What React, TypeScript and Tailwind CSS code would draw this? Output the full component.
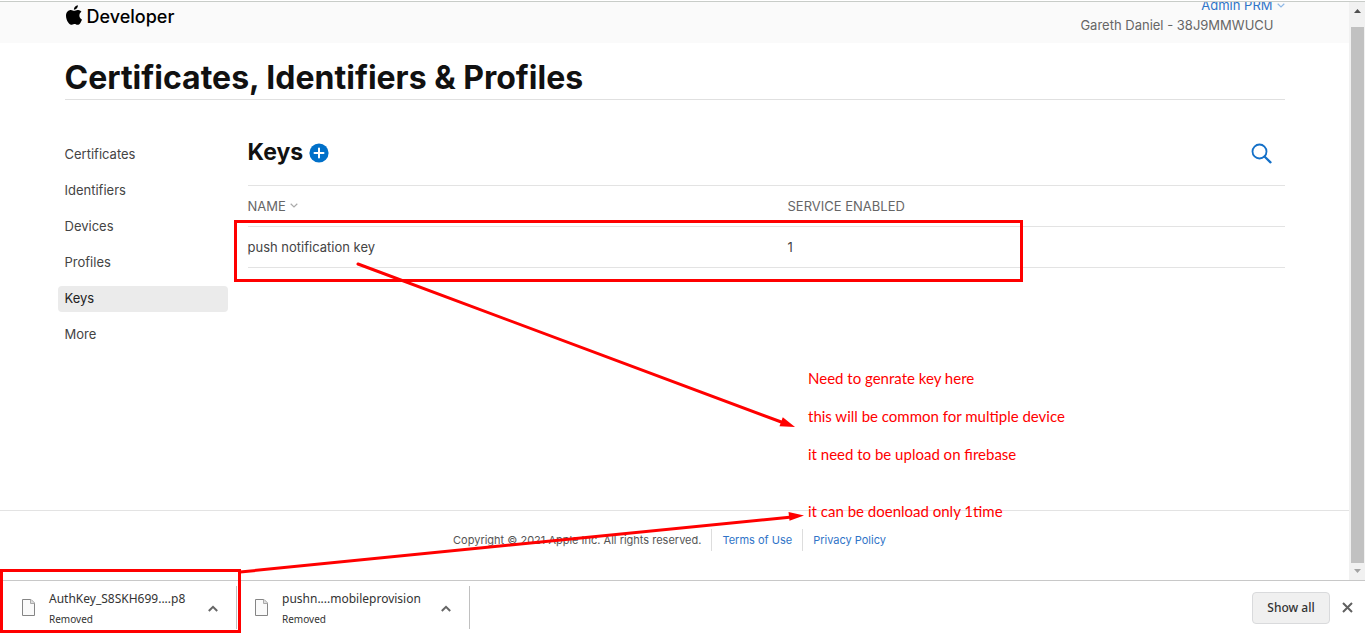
import React from "react";

const navItems = ["Certificates", "Identifiers", "Devices", "Profiles", "Keys", "More"];

const keys = [{ name: "push notification key", services: 1 }];

const downloads = ["AuthKey_S8SKH699....p8", "pushn....mobileprovision"];

function AppleLogo() {
  return (
    <svg width="16" height="20" viewBox="0 0 814 1000" fill="#000" aria-hidden="true">
      <path d="M788.1 340.9c-5.800 4.500-108.200 62.200-108.200 190.500 0 148.400 130.300 200.900 134.200 202.200-.6 3.200-20.700 71.900-68.700 141.900-42.800 61.600-87.500 123.100-155.500 123.100s-85.500-39.500-164-39.500c-76.500 0-103.700 40.800-165.900 40.800s-105.600-57-155.500-127C46.700 790.700 0 663 0 541.800c0-194.400 126.400-297.500 250.800-297.500 66.100 0 121.200 43.400 162.700 43.400 39.500 0 101.100-46 176.300-46 28.500 0 130.900 2.600 198.300 99.200zm-234-181.500c31.100-36.900 53.100-88.100 53.100-139.300 0-7.100-.6-14.300-1.900-20.100-50.600 1.900-110.800 33.700-147.100 75.800-28.500 32.400-55.100 83.600-55.100 135.500 0 7.800 1.300 15.600 1.900 18.100 3.200.6 8.400 1.300 13.600 1.300 45.400 0 102.500-30.400 135.500-71.300z" />
    </svg>
  );
}

function Chevron({ color }: { color: string }) {
  return (
    <svg width="8" height="5" viewBox="0 0 8 5" fill="none" stroke={color} strokeWidth="1.200" aria-hidden="true">
      <path d="M.7.8 4 3.900 7.300.8" />
    </svg>
  );
}

function Header() {
  return (
    <header className="h-[41px] overflow-hidden bg-[#fafafa]">
      <div className="mx-auto flex h-full max-w-[1220px] items-start justify-between">
        <a href="#developer" className="flex items-center gap-[5px] pt-px pl-px text-lg leading-7 font-medium text-black">
          <span className="-mt-1">
            <AppleLogo />
          </span>
          Developer
        </a>
        <div className="-mt-[7px] text-[13px] leading-5 text-[#666]">
          <button type="button" className="ml-auto flex items-center gap-1 text-[#2f74c8]">
            Admin PRM <Chevron color="#8fb8e6" />
          </button>
          <p className="pr-[11px]">Gareth Daniel - 38J9MMWUCU</p>
        </div>
      </div>
    </header>
  );
}

function Sidebar() {
  return (
    <nav className="-ml-[7px] flex w-[170px] shrink-0 flex-col gap-[10px]">
      {navItems.map((item) => (
        <a
          key={item}
          href={`#${item.toLowerCase()}`}
          className={
            item === "Keys"
              ? "rounded bg-[#ebebeb] px-[7px] pb-[2px] text-[13px] leading-6 text-[#222]"
              : "px-[7px] pb-[2px] text-[13px] leading-6 text-[#444]"
          }
        >
          {item}
        </a>
      ))}
    </nav>
  );
}

function KeysPanel() {
  return (
    <main className="min-w-0 flex-1">
      <div className="flex h-[50px] items-start justify-between border-b border-[#e3e3e3] pr-[13px]">
        <div className="flex items-center gap-[6px]">
          <h2 className="text-[23px] leading-8 font-bold text-[#111]">Keys</h2>
          <button type="button" aria-label="Add key" className="pt-[2px]">
            <svg width="20" height="20" viewBox="0 0 20 20">
              <circle cx="10" cy="10" r="9.600" fill="#0070c9" />
              <path d="M10 5.500v9M5.500 10h9" stroke="#fff" strokeWidth="2" strokeLinecap="round" />
            </svg>
          </button>
        </div>
        <button type="button" aria-label="Search" className="pt-[7px]">
          <svg width="21" height="21" viewBox="0 0 21 21" fill="none" stroke="#1470c8">
            <circle cx="8.500" cy="8.500" r="7" strokeWidth="1.800" />
            <path d="m13.500 13.500 6 5.800" strokeWidth="2.300" strokeLinecap="round" />
          </svg>
        </button>
      </div>
      <table className="w-full table-fixed border-separate border-spacing-0 text-left text-[13px] leading-5">
        <thead className="text-[#666]">
          <tr className="h-[41px]">
            <th className="w-[540px] border-b border-[#e3e3e3] pb-px font-normal">
              <span className="flex items-center gap-1">
                NAME <Chevron color="#aaa" />
              </span>
            </th>
            <th className="border-b border-[#e3e3e3] pb-px font-normal">SERVICE ENABLED</th>
          </tr>
        </thead>
        <tbody className="text-[#444]">
          {keys.map((key) => (
            <tr key={key.name} className="h-[41px]">
              <td className="border-b border-[#e3e3e3] pb-px">{key.name}</td>
              <td className="border-b border-[#e3e3e3] pb-px">{key.services}</td>
            </tr>
          ))}
        </tbody>
      </table>
    </main>
  );
}

function Footer() {
  return (
    <footer className="flex h-[70px] justify-center border-t border-[#e3e3e3] pt-[18px] pr-[10px] text-[11px] leading-[22px] text-[#555]">
      <p className="pr-[10px]">Copyright © 2021 Apple Inc. All rights reserved.</p>
      <a href="#terms" className="h-[22px] border-l border-[#ddd] px-[10px] text-[#2f74c8]">
        Terms of Use
      </a>
      <a href="#privacy" className="h-[22px] border-l border-[#ddd] pl-[10px] text-[#2f74c8]">
        Privacy Policy
      </a>
    </footer>
  );
}

function Scrollbar() {
  return (
    <div className="flex w-4 shrink-0 flex-col items-center bg-[#f1f1f1]" aria-hidden="true">
      <svg className="mt-[4px] mb-[8px] ml-px" width="7" height="13" viewBox="0 0 7 13">
        <path d="M0 7h7L3.500 3z" fill="#505050" />
      </svg>
      <div className="ml-px w-[13px] flex-1 bg-[#c1c1c1]" />
      <svg className="my-[2px] ml-px" width="7" height="13" viewBox="0 0 7 13">
        <path d="M0 4h7L3.500 8z" fill="#a3a3a3" />
      </svg>
    </div>
  );
}

function DownloadItem({ name }: { name: string }) {
  return (
    <div className="my-[5px] flex w-[233px] items-center border-r border-[#c0c0c0] pl-[18px]">
      <svg className="shrink-0" width="13" height="17" viewBox="0 0 13 17" fill="#fafafa" stroke="#858585">
        <path d="M.5.5h8.500l3.500 3.500v12.500H.5z" />
        <path d="M8.500.5V4.500h4" fill="#ddd" stroke="#aaa" />
      </svg>
      <div className="ml-[14px] flex-1 pt-[2px] text-[#333]">
        <p className="text-xs leading-5">{name}</p>
        <p className="text-[10px] leading-5">Removed</p>
      </div>
      <button type="button" aria-label={`Options for ${name}`} className="pt-[2px] pr-[18px]">
        <svg width="10" height="7" viewBox="0 0 10 7" fill="none" stroke="#666" strokeWidth="2">
          <path d="M.8 6 5 1.800 9.200 6" />
        </svg>
      </button>
    </div>
  );
}

function DownloadsBar() {
  return (
    <div className="flex h-[54px] border-t border-[#c8c8c8] bg-white font-['Noto_Sans',sans-serif]">
      <div className="flex pl-[4px]">
        {downloads.map((name) => (
          <DownloadItem key={name} name={name} />
        ))}
      </div>
      <div className="ml-auto flex items-center gap-3 pr-3">
        <button
          type="button"
          className="h-8 w-[78px] rounded border border-[#d9dadc] bg-[#f0f0f0] text-xs font-medium text-[#333]"
        >
          Show all
        </button>
        <button type="button" aria-label="Close downloads bar">
          <svg width="11" height="11" viewBox="0 0 11 11" stroke="#606060" strokeWidth="2">
            <path d="m1 1 9 9M10 1l-9 9" />
          </svg>
        </button>
      </div>
    </div>
  );
}

function Annotations() {
  return (
    <div className="pointer-events-none absolute inset-0 overflow-hidden">
      <div className="absolute top-[220px] left-[234px] h-[62px] w-[789px] border-3 border-[#f00]" />
      <div className="absolute top-[569px] left-0 h-[64px] w-[241px] border-3 border-[#f00]" />
      <svg className="absolute top-0 left-0" width="1365" height="634" fill="#f00" stroke="none">
        <path d="M358 264 784 423" stroke="#f00" strokeWidth="3" strokeLinecap="round" />
        <path d="m795 427-15.500-.8 3.300-9z" />
        <path d="M240 572 792 517" stroke="#f00" strokeWidth="3" />
        <path d="m804 515.500-14.500 5.200-1-8.800z" />
      </svg>
      <div className="absolute top-[369px] left-[808px] flex flex-col gap-[19px] font-['Lato',sans-serif] text-[15px] leading-[19px] whitespace-nowrap text-[#f00]">
        <p>Need to genrate key here</p>
        <p>this will be common for multiple device</p>
        <p>it need to be upload on firebase</p>
        <p className="pt-[19px]">it can be doenload only 1time</p>
      </div>
    </div>
  );
}

export default function App() {
  return (
    <div className="relative flex min-h-screen flex-col bg-white pt-px font-['Inter',sans-serif]">
      <div className="flex flex-1 border-t border-[#c8ccc8]">
        <div className="flex min-w-0 flex-1 flex-col">
          <Header />
          <div className="mx-auto w-full max-w-[1220px] flex-1">
            <h1 className="border-b border-[#e0e0e0] pt-[14px] text-[32px] leading-[42px] font-bold text-[#111]">
              Certificates, Identifiers &amp; Profiles
            </h1>
            <div className="flex gap-5 pt-9">
              <div className="pt-[6px]">
                <Sidebar />
              </div>
              <KeysPanel />
            </div>
          </div>
          <Footer />
        </div>
        <Scrollbar />
      </div>
      <DownloadsBar />
      <Annotations />
    </div>
  );
}
